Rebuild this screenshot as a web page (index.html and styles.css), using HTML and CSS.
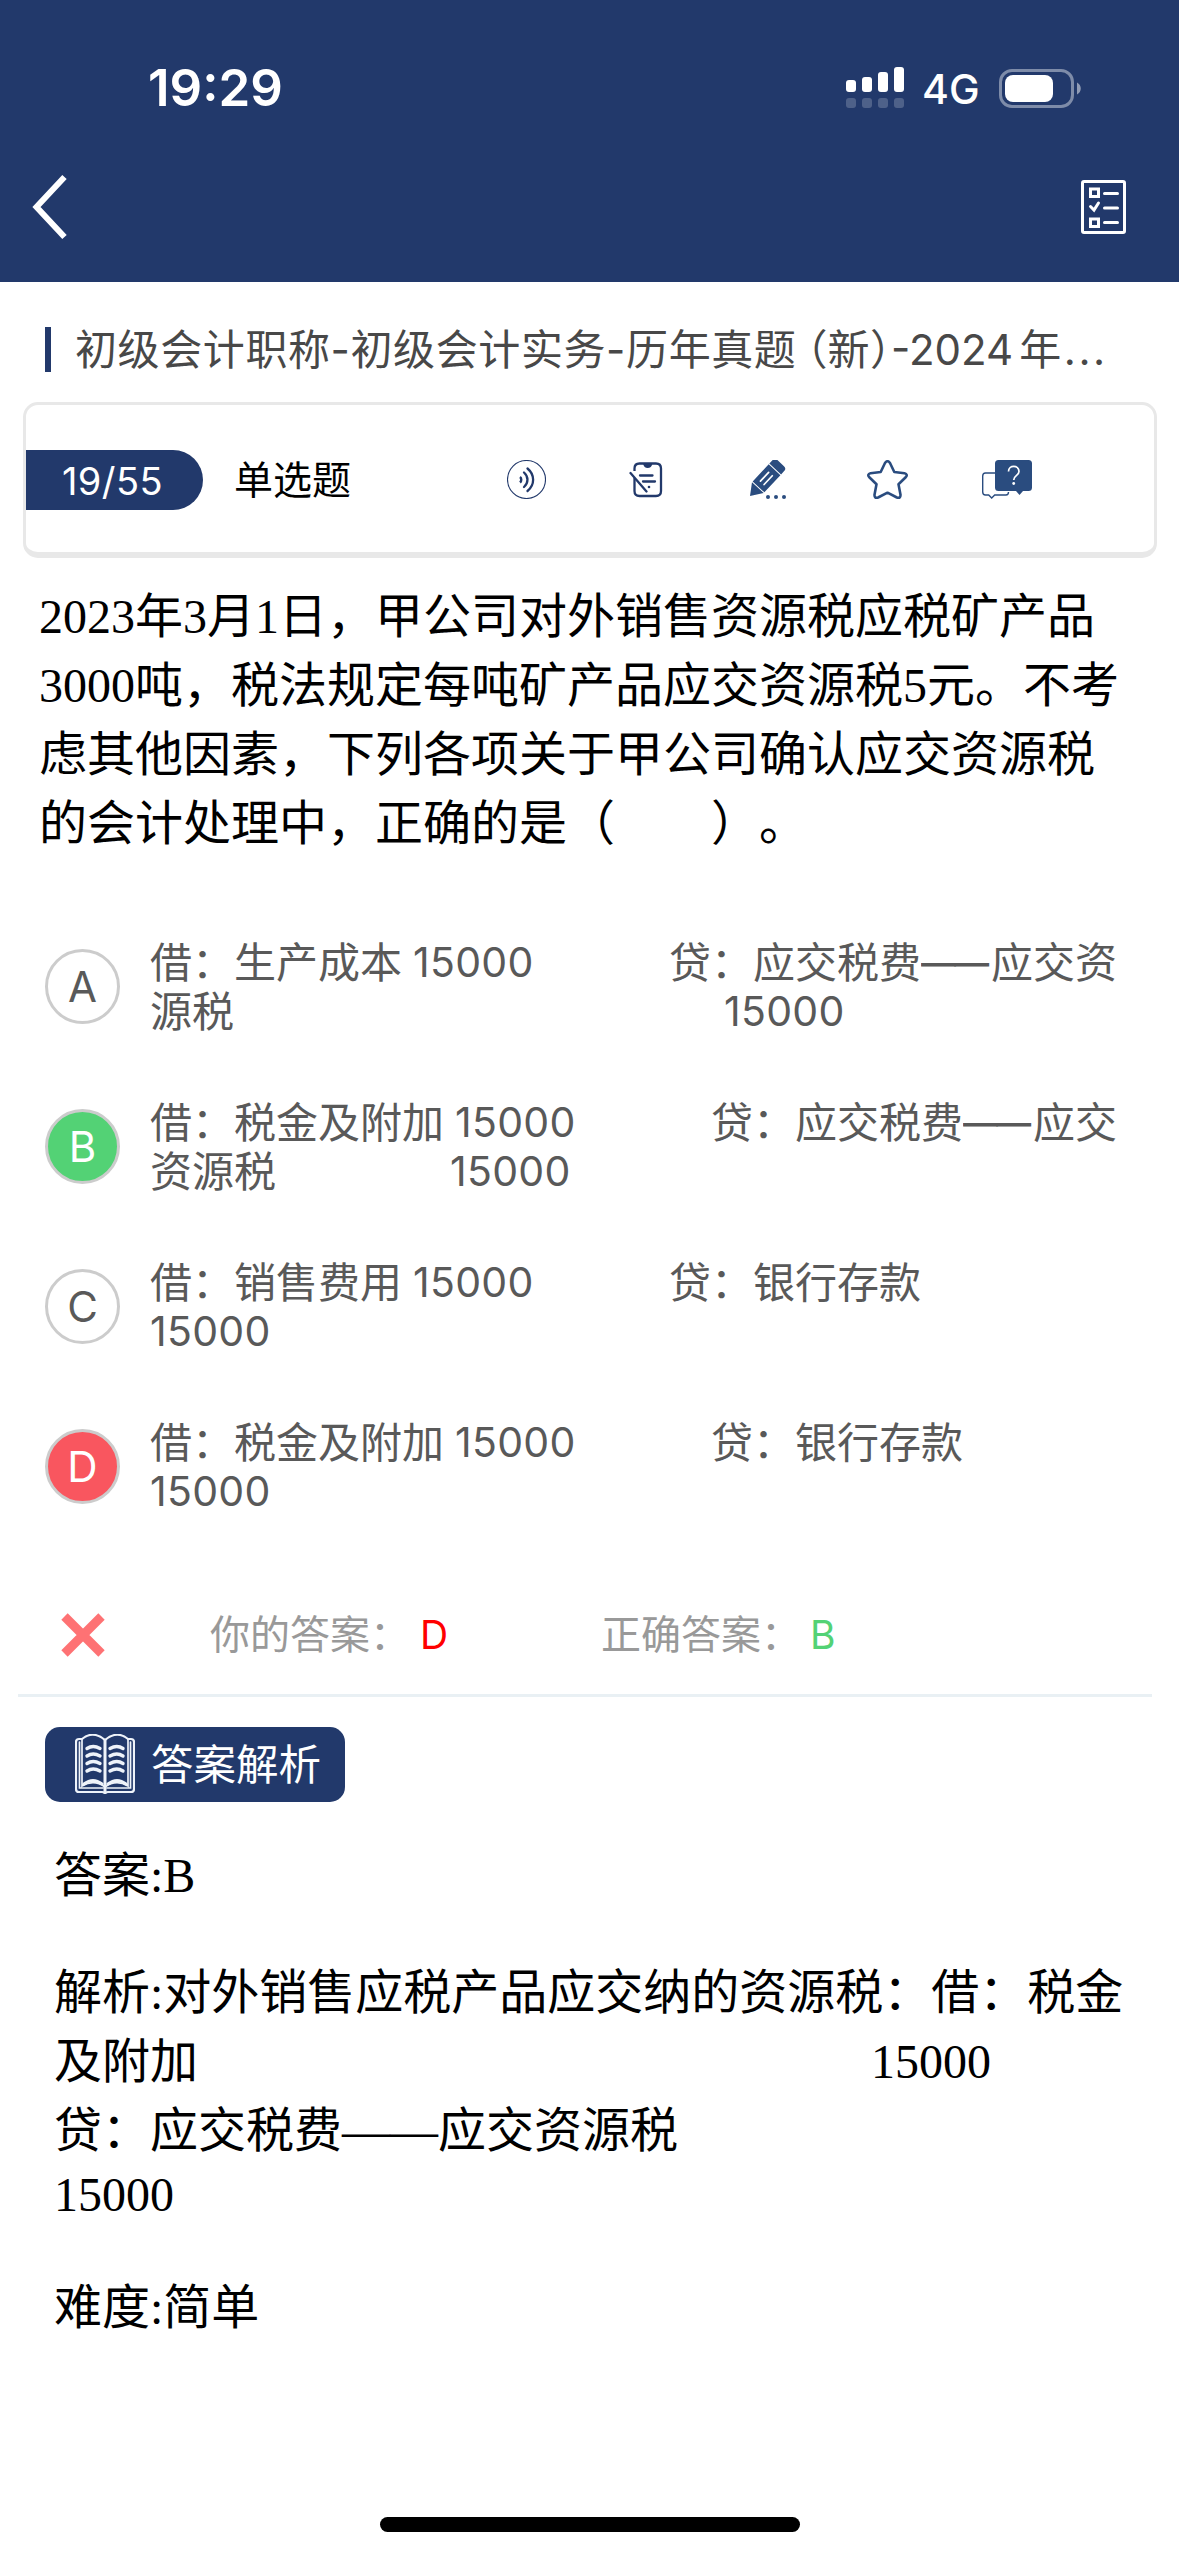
FILE: index.html
```html
<!DOCTYPE html>
<html lang="zh-CN">
<head>
<meta charset="utf-8">
<title>初级会计实务 - 历年真题</title>
<link rel="stylesheet" href="styles.css">
</head>
<body>
<div class="screen">
  <header class="header">
    <div class="status">
      <span class="time">19:29</span>
      <svg class="signal" width="58" height="41" viewBox="0 0 58 41" fill="#fff">
        <rect x="0" y="13" width="10" height="12" rx="3"/><rect x="16" y="10" width="10" height="15" rx="3"/>
        <rect x="32" y="5" width="10" height="20" rx="3"/><rect x="48" y="0" width="10" height="25" rx="3"/>
        <g opacity=".2"><rect x="0" y="31" width="10" height="10" rx="3"/><rect x="16" y="31" width="10" height="10" rx="3"/>
        <rect x="32" y="31" width="10" height="10" rx="3"/><rect x="48" y="31" width="10" height="10" rx="3"/></g>
      </svg>
      <span class="network">4G</span>
      <svg class="battery" width="83" height="39" viewBox="0 0 83 39">
        <rect x="1.5" y="1.5" width="72" height="36" rx="11.5" fill="none" stroke="#fff" stroke-opacity=".42" stroke-width="3"/>
        <rect x="6" y="6" width="48" height="27" rx="8" fill="#fff"/>
        <path d="M78 13.5c5 2.500 5 9.500 0 12z" fill="#fff" fill-opacity=".5"/>
      </svg>
    </div>
    <nav class="nav">
      <svg width="38" height="66" viewBox="0 0 38 66"><path d="M34.500 3L6.500 33l28 30" fill="none" stroke="#fff" stroke-width="6"/></svg>
      <svg width="45" height="54" viewBox="0 0 45 54" fill="none" stroke="#fff" stroke-width="3">
        <rect x="1.5" y="1.500" width="42" height="51" rx="1.5"/>
        <rect x="9.500" y="9" width="8" height="7.500"/><rect x="9.500" y="39" width="8" height="7.500"/>
        <path d="M9.500 26.500l3.500 3.500 4.500-7M23.500 13.500h13M23.500 28h13M23.500 42.500h13" stroke-linecap="round"/>
      </svg>
    </nav>
  </header>

  <div class="title"><span class="title-bar"></span><span class="title-text">初级会计职称-初级会计实务-历年真题<span class="paren open">（</span>新<span class="paren">）</span><span class="title-year">-2024</span>年<span class="dots">...</span></span></div>

  <section class="card">
    <span class="pill">19/55</span>
    <span class="kind">单选题</span>
    <div class="tools">
      <svg width="39" height="39" viewBox="0 0 39 39" fill="none" stroke="#22396b">
        <circle cx="19.500" cy="19.500" r="19" stroke-width="1.100"/>
        <path d="M13 17c1.700 1.300 1.700 4 0 5.500" stroke-width="2.400"/>
        <path d="M17 12.500c4.600 4 4.600 10.500 0 14.500M20.500 8.500c7.500 6.200 7.500 16.500 0 22.500" stroke-width="2.300" stroke-linecap="round"/>
      </svg>
      <svg class="note" width="34" height="36" viewBox="0 0 34 36" fill="none" stroke="#22396b" stroke-width="2.300">
        <path d="M5.500 9V6.500q0-5 5-5H27q5 0 5 5v22.500q0 5-5 5H10.500q-5 0-5-5V16"/>
        <path d="M14 1.500q1 4.500 4.700 4.500T23.500 1.500z" fill="#22396b" stroke="none"/>
        <path d="M1.500 11l16 18.500M11 13.500h12.500M14 19.500h12" stroke-linecap="round"/>
        <circle cx="20" cy="25" r="1.300" fill="#22396b" stroke="none"/>
      </svg>
      <svg class="pencil" width="36" height="39" viewBox="0 0 36 39">
        <g transform="translate(0 36) rotate(-47)" fill="#2a4c7f">
          <path d="M0 0L11.500-8V8zM12.500-8H36V8H12.500zM37-8h4.500q3.500 0 3.500 3.500v9Q45 8 41.500 8H37z"/>
          <path d="M18-2.500h12M18 2.500h12" stroke="#fff" stroke-width="1.700" stroke-linecap="round"/>
        </g>
        <g fill="#2a4c7f"><circle cx="18" cy="37" r="2"/><circle cx="26" cy="37" r="2"/><circle cx="34" cy="37" r="2"/></g>
      </svg>
      <svg class="star" width="41" height="39" viewBox="0 0 41 39">
        <path d="M18 3q2.500-3.600 5 0l4.300 9 10.200 1.300q3.700.9 1.200 4l-7.200 6.900 2 10.500q.2 3.900-3.600 2.800l-9.400-4.800-9.400 4.800q-3.800 1.100-3.600-2.800l2-10.500-7.200-6.900q-2.500-3.100 1.200-4L13.700 12z" fill="none" stroke="#2a4c7f" stroke-width="2.600" stroke-linejoin="round"/>
      </svg>
      <svg class="chat" width="50" height="39" viewBox="0 0 50 39">
        <path d="M14 13H3.500Q.7 13 .7 16v16q0 3 2.800 3h3.200l3 3 3-3H24q2.500 0 2.500-3" fill="none" stroke="#2a4c7f" stroke-width="1.400"/>
        <path d="M16.500 0h30q3.500 0 3.500 3.500v24q0 3.500-3.500 3.500h-5.500l-3.500 4-3.500-4H16.500q-3.500 0-3.500-3.500v-24Q13 0 16.500 0z" fill="#2a4c7f"/>
        <path d="M26.500 11.500c0-6.800 10.500-6.800 10.500 0 0 4-5.300 3.700-5.300 8.500" fill="none" stroke="#fff" stroke-width="1.700"/>
        <circle cx="31.700" cy="23.500" r="1.400" fill="#fff"/>
      </svg>
    </div>
  </section>

  <p class="question">2023年3月1日，甲公司对外销售资源税应税矿产品<br>3000吨，税法规定每吨矿产品应交资源税5元。不考<br>虑其他因素，下列各项关于甲公司确认应交资源税<br>的会计处理中，正确的是（　　）。</p>

  <ul class="options">
    <li class="option">
      <span class="mark">A</span>
      <div class="entry">
        <div class="row debit-short"><span>借：生产成本</span><span class="num">15000</span><span>贷：应交税费<span class="dash">——</span>应交资</span></div>
        <div class="row tail-a"><span>源税</span><span class="num">15000</span></div>
      </div>
    </li>
    <li class="option">
      <span class="mark right">B</span>
      <div class="entry">
        <div class="row debit-long"><span>借：税金及附加</span><span class="num">15000</span><span>贷：应交税费<span class="dash">——</span>应交</span></div>
        <div class="row tail-b"><span>资源税</span><span class="num">15000</span></div>
      </div>
    </li>
    <li class="option">
      <span class="mark">C</span>
      <div class="entry">
        <div class="row debit-short"><span>借：销售费用</span><span class="num">15000</span><span>贷：银行存款</span></div>
        <div class="row"><span class="num">15000</span></div>
      </div>
    </li>
    <li class="option">
      <span class="mark wrong">D</span>
      <div class="entry">
        <div class="row debit-long"><span>借：税金及附加</span><span class="num">15000</span><span>贷：银行存款</span></div>
        <div class="row"><span class="num">15000</span></div>
      </div>
    </li>
  </ul>

  <div class="result">
    <svg width="44" height="44" viewBox="0 0 44 44"><path d="M3.500 3.500l37 37M40.500 3.500l-37 37" stroke="#fe7274" stroke-width="9"/></svg>
    <span class="label mine">你的答案：</span><span class="given">D</span>
    <span class="label correct">正确答案：</span><span class="expected">B</span>
  </div>

  <div class="badge">
    <svg width="60" height="60" viewBox="0 0 60 60" fill="none" stroke="#eef3fa" stroke-width="2.200" stroke-linecap="round">
      <path d="M30 6Q18-4 7 5H4Q1 5 1 8v47q0 3 3 3h23q3 0 3 1.500 0-1.500 3-1.500h23q3 0 3-3V8q0-3-3-3h-3Q42-4 30 6z"/>
      <path d="M30 6v53" stroke-width="3"/>
      <path d="M7 5v47q12-7 23 1 11-8 23-1V5M4.500 8v46H28M55.500 8v46H32" stroke-width="1.700"/>
      <path d="M12 14.500q6-4 13 0M12 22q6-4 13 0M12 29.500q6-4 13 0M12 37q6-4 13 0M35 14.500q7-4 13 0M35 22q7-4 13 0M35 29.500q7-4 13 0M35 37q7-4 13 0" stroke-width="3.400"/>
      <path d="M9 50q9-7 18 0M33 50q9-7 18 0" stroke-width="3"/>
    </svg>
    <span class="badge-text">答案解析</span>
  </div>

  <section class="analysis">
    <p>答案:B</p>
    <div class="explain">
      <p>解析:对外销售应税产品应交纳的资源税：借：税金</p>
      <p class="split"><span>及附加</span><span>15000</span></p>
      <p>贷：应交税费——应交资源税</p>
      <p class="amount">15000</p>
    </div>
    <p class="level">难度:简单</p>
  </section>

  <footer class="home"><span class="home-bar"></span></footer>
</div>
</body>
</html>
```
FILE: styles.css
```css
* { box-sizing: border-box; margin: 0; padding: 0; }

body {
  background: #fff;
  font-family: Inter, "Noto Sans CJK SC", sans-serif;
  color: #000;
  text-spacing-trim: space-all;
}

svg { display: block; flex: none; }

.screen {
  width: 1179px;
  height: 2556px;
  display: flex;
  flex-direction: column;
  overflow: hidden;
  white-space: nowrap;
}

.header { height: 282px; flex: none; background: #22396b; color: #fff; }
.status { height: 132px; padding: 44px 0 0 148px; display: flex; align-items: center; }
.time { width: 698px; font-size: 51px; font-weight: 600; line-height: 88px; }
.signal { margin-top: -1px; }
.network { width: 77px; margin: 2px 0 0 18px; font-size: 41px; font-weight: 500; }
.nav { display: flex; justify-content: space-between; align-items: center; padding: 42px 53px 0 30px; }

.title { display: flex; align-items: center; height: 45px; margin: 45px 0 0 45px; flex: none; }
.title-bar { width: 6px; height: 45px; background: #22396b; margin-right: 24px; }
.title-text { font-size: 42px; line-height: 44px; letter-spacing: 0.600px; color: #484848; }
.paren { font-feature-settings: "halt"; letter-spacing: 0; }
.open { margin-left: 10px; }
.title-year { letter-spacing: 0; margin-right: 6px; }
.dots { letter-spacing: 2.500px; margin-left: 2px; }

.card {
  display: flex;
  align-items: center;
  width: 1134px;
  height: 156px;
  margin: 30px 0 0 23px;
  flex: none;
  border: 3px solid #e8e8e8;
  border-bottom-width: 6px;
  border-radius: 15px;
}
.pill {
  width: 177px;
  height: 60px;
  margin-top: 3px;
  padding-left: 36px;
  border-radius: 0 30px 30px 0;
  background: #22396b;
  color: #fff;
  font-size: 38px;
  line-height: 62px;
  letter-spacing: 0.400px;
}
.kind { width: 122px; margin: 2px 0 0 31px; font-size: 39px; line-height: 60px; }
.tools { margin: 2px 0 0 151px; display: flex; align-items: center; }
.note { margin-left: 83px; }
.pencil { margin-left: 87px; }
.star { margin-left: 81px; }
.chat { margin-left: 74px; }

.question {
  margin: 24px 0 0 39px;
  height: 324px;
  flex: none;
  font: 48px/69px "Liberation Serif", "Noto Sans CJK SC", serif;
}

.options { list-style: none; flex: none; }
.option { display: flex; align-items: center; height: 160.250px; padding-left: 45px; color: #595959; }
.mark {
  width: 75px;
  height: 75px;
  margin-right: 30px;
  border: 3px solid #ccc;
  border-radius: 50%;
  font-size: 42px;
  line-height: 69px;
  text-align: center;
}
.right { background: #53d275; color: #fff; }
.wrong { background: #f9565f; color: #fff; }
.entry { padding-top: 1px; font-size: 42px; line-height: 49px; }
.row { display: grid; height: 49px; }
.debit-short { grid-template-columns: 263px 256px auto; }
.debit-long { grid-template-columns: 305px 256px auto; }
.tail-a { grid-template-columns: 574px auto; }
.tail-b { grid-template-columns: 300px auto; }
.num { font-size: 41px; letter-spacing: 0.300px; }
.dash {
  display: inline-block;
  width: 70px;
  letter-spacing: -2px;
  transform: scaleX(0.830);
  transform-origin: left;
}

.result {
  display: flex;
  align-items: center;
  height: 149.500px;
  flex: none;
  margin: 0 27px 0 18px;
  padding: 27px 0 0 43px;
  border-bottom: 3px solid #e9f0f4;
  font-size: 39px;
  line-height: 60px;
}
.result { padding-top: 30px; }
.label { color: #999; font-size: 40px; }
.mine { width: 210px; margin-left: 105px; }
.given { width: 181px; color: #f00; }
.correct { width: 209px; }
.expected { color: #53d275; }

.badge {
  display: flex;
  align-items: center;
  gap: 16px;
  width: 300px;
  height: 75px;
  margin: 30px 0 0 45px;
  padding-left: 30px;
  flex: none;
  border-radius: 15px;
  background: #22396b;
  color: #fff;
  font-size: 42.500px;
}
.badge-text { padding-bottom: 5px; }

.analysis { margin: 39px 0 0 54px; font: 48px/69px "Liberation Serif", "Noto Sans CJK SC", serif; }
.explain { margin-top: 48px; }
.split { display: grid; grid-template-columns: 817px auto; }
.amount { line-height: 60px; }
.level { margin-top: 48px; }

.home { margin-top: auto; padding-bottom: 24px; display: flex; justify-content: center; }
.home-bar { width: 420px; height: 15px; border-radius: 8px; background: #000; }
```
